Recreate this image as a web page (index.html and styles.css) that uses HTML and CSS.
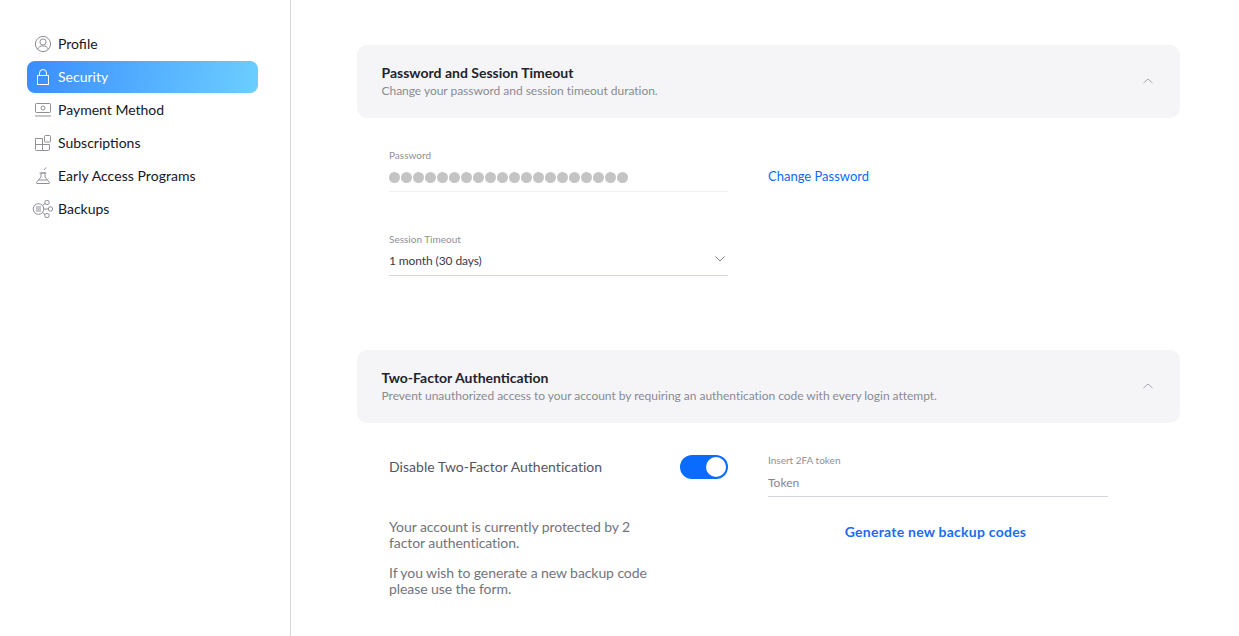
FILE: index.html
```html
<!DOCTYPE html>
<html lang="en">
<head>
<meta charset="utf-8">
<title>Security</title>
<link rel="stylesheet" href="styles.css">
</head>
<body>
<div class="page">
  <nav class="sidebar">
    <a class="nav-item"><svg class="nav-icon" viewBox="0 0 18 18"><circle cx="9" cy="9" r="7.600"/><circle cx="9" cy="7" r="3.100"/><path d="M3.600 14.300c.9-2.400 2.900-3.400 5.400-3.400s4.500 1 5.400 3.400"/></svg><span class="nav-text">Profile</span></a>
    <a class="nav-item active"><svg class="nav-icon" viewBox="0 0 18 18"><rect x="3.500" y="7.500" width="11" height="9"/><path d="M5.500 7.500V5a3.500 3.500 0 0 1 7 0v2.500"/></svg><span class="nav-text">Security</span></a>
    <a class="nav-item"><svg class="nav-icon" viewBox="0 0 18 18"><rect x="1.500" y="2.500" width="15" height="9" rx=".8"/><circle cx="9" cy="7" r="2"/><path d="M1 15h16"/></svg><span class="nav-text">Payment Method</span></a>
    <a class="nav-item"><svg class="nav-icon" viewBox="0 0 18 18"><path d="M1.500 4.500h7v12H2.500a1 1 0 0 1-1-1zM1.500 10.500h14v5a1 1 0 0 1-1 1h-6"/><rect x="10.500" y="1.500" width="6" height="6.500" rx="1"/></svg><span class="nav-text">Subscriptions</span></a>
    <a class="nav-item"><svg class="nav-icon" viewBox="0 0 18 18"><path d="M7 6v4l-4.500 5.500a.6.6 0 0 0 .5 1h12a.6.6 0 0 0 .5-1L11 10V6zM5.500 6h7M4.500 13h9M10 3l2-2.500"/></svg><span class="nav-text early">Early Access Programs</span></a>
    <a class="nav-item"><svg class="nav-icon wide" viewBox="0 0 22 18"><circle cx="6.500" cy="9" r="5.300"/><path d="M4 7h5M4 9h5M4 11h5M11.800 9h4.500M10.500 5.500l2.500-2M10.500 12.500l2.500 2"/><circle cx="15" cy="2.400" r="2.200"/><circle cx="18.500" cy="9" r="2.200"/><circle cx="15" cy="15.600" r="2.200"/></svg><span class="nav-text">Backups</span></a>
  </nav>
  <main class="content">
    <section class="section">
      <header class="panel">
        <div>
          <h2 class="panel-title">Password and Session Timeout</h2>
          <p class="panel-sub">Change your password and session timeout duration.</p>
        </div>
        <svg class="panel-chevron" viewBox="0 0 10 6"><path d="M.5 5 5 1l4.500 4"/></svg>
      </header>
      <div class="password-row">
        <div class="field field-light">
          <label class="field-label">Password</label>
          <div class="dots"><i></i><i></i><i></i><i></i><i></i><i></i><i></i><i></i><i></i><i></i><i></i><i></i><i></i><i></i><i></i><i></i><i></i><i></i><i></i><i></i></div>
        </div>
        <a class="change-link">Change Password</a>
      </div>
      <div class="field timeout">
        <label class="field-label">Session Timeout</label>
        <div class="select-value"><span>1 month (30 days)</span><svg class="select-chevron" viewBox="0 0 10 6"><path d="M.5.5 5 5 9.500.5"/></svg></div>
      </div>
    </section>
    <section class="section second">
      <header class="panel">
        <div>
          <h2 class="panel-title">Two-Factor Authentication</h2>
          <p class="panel-sub">Prevent unauthorized access to your account by requiring an authentication code with every login attempt.</p>
        </div>
        <svg class="panel-chevron" viewBox="0 0 10 6"><path d="M.5 5 5 1l4.500 4"/></svg>
      </header>
      <div class="tfa-grid">
        <div class="tfa-left">
          <div class="toggle-row">
            <span class="toggle-label">Disable Two-Factor Authentication</span>
            <span class="toggle"><span class="knob"></span></span>
          </div>
          <p class="note first-note">Your account is currently protected by 2 factor authentication.</p>
          <p class="note">If you wish to generate a new backup code please use the form.</p>
        </div>
        <div class="tfa-right">
          <div class="token">
            <label class="field-label">Insert 2FA token</label>
            <div class="token-value">Token</div>
          </div>
          <a class="backup-link">Generate new backup codes</a>
        </div>
      </div>
    </section>
  </main>
</div>
</body>
</html>
```
FILE: styles.css
```css
* { box-sizing: border-box; }
html, body { margin: 0; height: 100%; overflow: hidden; background: #fff; }
body { font-family: Lato, "Liberation Sans", sans-serif; color: #1d1d2b; }
.page { display: flex; height: 636px; }

.sidebar {
  flex: 0 0 291px;
  border-right: 1px solid #d6d6dc;
  padding: 28px 32px 0 27px;
  display: flex;
  flex-direction: column;
  gap: 1px;
}
.nav-item {
  display: flex;
  align-items: center;
  height: 32px;
  border-radius: 8px;
  padding-left: 7px;
  gap: 6px;
  font-size: 14px;
  color: #16161f;
}
.nav-text { padding-bottom: 2px; }
.nav-text.early { letter-spacing: .05px; }
.nav-item.active {
  background: linear-gradient(100deg, #3a8dff 0%, #6bcfff 100%);
  color: #fff;
}
.nav-icon {
  width: 18px;
  height: 18px;
  flex: none;
  fill: none;
  stroke: #8f8f97;
  stroke-width: 1;
}
.nav-icon.wide { width: 22px; margin: 0 -2px; }
.active .nav-icon { stroke: #fff; }

.content { flex: 1; padding: 45px 59px 0 66px; }
.section.second { margin-top: 74px; }
.panel {
  height: 73px;
  background: #f5f5f8;
  border-radius: 10px;
  padding: 20px 27px 0 24.5px;
  display: flex;
  justify-content: space-between;
  align-items: flex-start;
}
.panel-title { margin: 0; font-size: 14px; line-height: 16px; font-weight: 700; color: #23232d; }
.panel-sub { margin: 3px 0 0; font-size: 12px; line-height: 14px; letter-spacing: -.03px; color: #8a8a94; }
.panel-chevron { width: 10px; height: 6px; margin-top: 13px; fill: none; stroke: #a5a5ad; stroke-width: 1; }

.password-row { display: flex; align-items: flex-start; padding: 32px 0 0 32px; gap: 40px; }
.field { width: 339px; }
.field-label { display: block; font-size: 10px; line-height: 12px; margin-top: -1px; color: #8f8f99; }
.field-light { height: 42px; border-bottom: 1px solid #f0f0f3; }
.dots { display: flex; gap: 1px; margin-top: 11px; }
.dots i { width: 11px; height: 11px; border-radius: 50%; background: #c4c4c4; }
.change-link { font-size: 13px; line-height: 16px; margin-top: 18px; color: #0b6bf5; }
.timeout { margin: 42px 0 0 32px; height: 43px; border-bottom: 1px solid #d5d5e0; }
.select-value {
  display: flex;
  justify-content: space-between;
  align-items: center;
  margin-top: 6px;
  height: 18px;
  font-size: 12px;
  letter-spacing: -.1px;
  color: #3a3a46;
}
.select-chevron { width: 10px; height: 6px; margin: 0 3px 2px 0; fill: none; stroke: #83838e; stroke-width: 1; }

.tfa-grid { display: flex; gap: 40px; padding: 32px 0 0 32px; }
.tfa-left { width: 339px; }
.toggle-row { display: flex; justify-content: space-between; align-items: center; height: 24px; }
.toggle-label { font-size: 14px; letter-spacing: .03px; padding-bottom: 2px; color: #55555f; }
.toggle {
  width: 48px;
  height: 24px;
  border-radius: 12px;
  background: #0a6cff;
  padding: 2px;
  display: flex;
  justify-content: flex-end;
}
.knob { width: 20px; height: 20px; border-radius: 50%; background: #fff; }
.note { margin: 0; width: 270px; font-size: 14px; line-height: 16px; letter-spacing: -.08px; color: #73737e; }
.first-note { margin: 40px 0 14px; }
.tfa-right { width: 340px; display: flex; flex-direction: column; }
.token { height: 42px; border-bottom: 1px solid #d5d5e0; }
.token-value { margin-top: 10px; font-size: 12px; line-height: 14px; color: #85858f; }
.backup-link { margin-top: 26px; padding-right: 5px; text-align: center; font-size: 14px; line-height: 17px; letter-spacing: .24px; font-weight: 700; color: #1a6cf0; }
```
